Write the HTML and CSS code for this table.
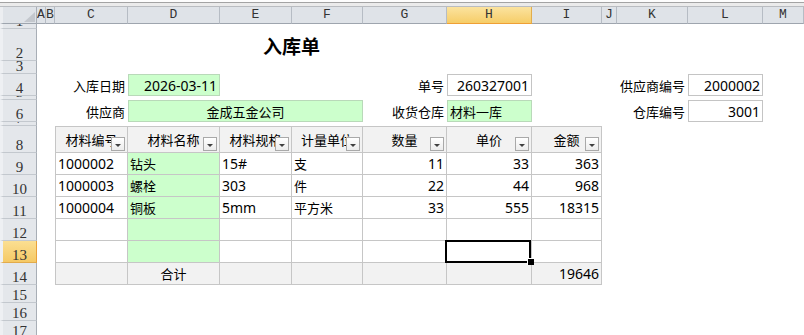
FILE: index.html
```html
<!DOCTYPE html>
<html lang="zh-CN">
<head>
<meta charset="utf-8">
<title>入库单</title>
<link rel="stylesheet" href="styles.css">
</head>
<body>
<div class="window">
  <div class="formula-edge"></div>
  <div class="sheet">
    <div class="row r-cols">
      <div class="corner"><svg width="11" height="10" viewBox="0 0 11 10"><polygon points="11,0 11,10 0,10" fill="#c3c7cd"/></svg></div>
      <div class="colhead">A</div>
      <div class="colhead">B</div>
      <div class="colhead">C</div>
      <div class="colhead">D</div>
      <div class="colhead">E</div>
      <div class="colhead">F</div>
      <div class="colhead">G</div>
      <div class="colhead active">H</div>
      <div class="colhead">I</div>
      <div class="colhead">J</div>
      <div class="colhead">K</div>
      <div class="colhead">L</div>
      <div class="colhead">M</div>
    </div>

    <div class="row r1"><div class="rh">1</div></div>
    <div class="row r2">
      <div class="rh">2</div>
      <div class="cell title span-ef">入库单</div>
    </div>
    <div class="row r3"><div class="rh">3</div></div>
    <div class="row r4">
      <div class="rh">4</div>
      <div class="cell label cc">入库日期</div>
      <div class="cell field green num right cd">2026-03-11</div>
      <div class="cell label cg">单号</div>
      <div class="cell field num right ch">260327001</div>
      <div class="cell label ck">供应商编号</div>
      <div class="cell field num right cl">2000002</div>
    </div>
    <div class="row r5"><div class="rh">5</div></div>
    <div class="row r6">
      <div class="rh">6</div>
      <div class="cell label cc">供应商</div>
      <div class="cell field green center span-df">金成五金公司</div>
      <div class="cell label cg">收货仓库</div>
      <div class="cell field green ch">材料一库</div>
      <div class="cell label ck">仓库编号</div>
      <div class="cell field num right cl">3001</div>
    </div>
    <div class="row r7"><div class="rh">7</div></div>

    <div class="row r8 thead">
      <div class="rh">8</div>
      <div class="tc cc first">材料编号<span class="filter"></span></div>
      <div class="tc">材料名称<span class="filter"></span></div>
      <div class="tc">材料规格<span class="filter"></span></div>
      <div class="tc">计量单位<span class="filter"></span></div>
      <div class="tc">数量<span class="filter"></span></div>
      <div class="tc">单价<span class="filter"></span></div>
      <div class="tc">金额<span class="filter"></span></div>
    </div>

    <div class="row rd">
      <div class="rh">9</div>
      <div class="tc cc first num">1000002</div>
      <div class="tc green">钻头</div>
      <div class="tc num">15#</div>
      <div class="tc">支</div>
      <div class="tc num right">11</div>
      <div class="tc num right">33</div>
      <div class="tc num right">363</div>
    </div>
    <div class="row rd">
      <div class="rh">10</div>
      <div class="tc cc first num">1000003</div>
      <div class="tc green">螺栓</div>
      <div class="tc num">303</div>
      <div class="tc">件</div>
      <div class="tc num right">22</div>
      <div class="tc num right">44</div>
      <div class="tc num right">968</div>
    </div>
    <div class="row rd">
      <div class="rh">11</div>
      <div class="tc cc first num">1000004</div>
      <div class="tc green">铜板</div>
      <div class="tc num">5mm</div>
      <div class="tc">平方米</div>
      <div class="tc num right">33</div>
      <div class="tc num right">555</div>
      <div class="tc num right">18315</div>
    </div>
    <div class="row rd">
      <div class="rh">12</div>
      <div class="tc cc first"></div>
      <div class="tc green"></div>
      <div class="tc"></div>
      <div class="tc"></div>
      <div class="tc"></div>
      <div class="tc"></div>
      <div class="tc"></div>
    </div>
    <div class="row rd">
      <div class="rh active">13</div>
      <div class="tc cc first"></div>
      <div class="tc green"></div>
      <div class="tc"></div>
      <div class="tc"></div>
      <div class="tc"></div>
      <div class="tc selected"></div>
      <div class="tc"></div>
    </div>
    <div class="row rd total">
      <div class="rh">14</div>
      <div class="tc cc first"></div>
      <div class="tc center">合计</div>
      <div class="tc"></div>
      <div class="tc"></div>
      <div class="tc"></div>
      <div class="tc"></div>
      <div class="tc num right">19646</div>
    </div>

    <div class="row rs"><div class="rh">15</div></div>
    <div class="row rs"><div class="rh">16</div></div>
    <div class="row rs"><div class="rh">17</div></div>
  </div>
</div>
</body>
</html>
```

FILE: styles.css
```css
* {
  box-sizing: border-box;
}

html,
body {
  margin: 0;
  padding: 0;
}

body {
  width: 804px;
  height: 335px;
  overflow: hidden;
  background: #fff;
  color: #000;
  font-family: "Noto Sans CJK SC", "Noto Sans", sans-serif;
  font-size: 13px;
}

/* bottom edge of the formula bar */
.formula-edge {
  height: 7px;
  background: linear-gradient(to bottom,
    #fdfdfd 0 2px,
    #a3a3a3 2px 3px,
    #ebebeb 3px 6px,
    #b9bcc0 6px 7px);
}

/* every sheet row shares the same column widths */
.row {
  display: grid;
  grid-template-columns: 37px 9px 9px 73px 92px 72px 71px 84px 85px 70px 15px 71px 75px 1fr;
}

.r-cols { height: 17px; }
.r1 { height: 5px; }
.r2 { height: 32px; }
.r3 { height: 13px; }
.r4 { height: 22px; }
.r5 { height: 4px; }
.r6 { height: 22px; }
.r7 { height: 4px; }
.r8 { height: 27px; }
.rd { height: 22px; }
.rs { height: 18px; }

/* column letters */
.corner {
  background: #dfe3e8;
  border-left: 3px solid #eceef1;
  border-right: 1px solid #a8aeb6;
  border-bottom: 1px solid #9ea5ae;
  display: flex;
  justify-content: flex-end;
  align-items: flex-end;
  padding: 0 1px 1px 0;
}

.colhead {
  background: #dfe3e8;
  border-right: 1px solid #b6bcc4;
  border-bottom: 1px solid #9ea5ae;
  font: 13px/16px "Liberation Mono", monospace;
  color: #333;
  text-align: center;
  overflow: hidden;
}

.colhead.active {
  background: linear-gradient(#fbe39f, #f6cd68);
  border-right-color: #e2ad4c;
  border-bottom-color: #ef9f35;
}

/* row numbers */
.rh {
  grid-column: 1;
  background: #e4e7eb;
  border-left: 3px solid #eef0f3;
  border-right: 1px solid #a8aeb6;
  border-bottom: 1px solid #c3c8ce;
  font: 15px/9px "Liberation Serif", serif;
  color: #333;
  display: flex;
  justify-content: center;
  align-items: flex-end;
  padding-bottom: 2px;
  overflow: hidden;
}

.rh.active {
  background: linear-gradient(#fbdf92, #f5c965);
  border-right-color: #e9a13a;
  border-bottom-color: #e2ab4c;
}

/* column placement */
.cc { grid-column: 4; }
.cd { grid-column: 5; }
.cg { grid-column: 8; }
.ch { grid-column: 9; }
.ck { grid-column: 12; }
.cl { grid-column: 13; }
.span-ef { grid-column: 6 / span 2; }
.span-df { grid-column: 5 / span 3; }

/* form cells */
.cell {
  display: flex;
  align-items: center;
  padding: 0 2px;
  white-space: nowrap;
  overflow: hidden;
}

.label {
  justify-content: flex-end;
  padding-right: 3px;
}

.field {
  border: 1px solid #c4c4c4;
  background: #fff;
}

.field.green {
  border-color: #b9d9b9;
}

.title {
  justify-content: center;
  font-size: 19px;
  font-weight: 700;
}

.green {
  background: #ccffcc;
}

.num {
  font-family: "Noto Sans", sans-serif;
  font-size: 14px;
}

.right {
  justify-content: flex-end;
}

.center {
  justify-content: center;
}

/* item table */
.tc {
  display: flex;
  align-items: center;
  padding: 0 2px;
  border-right: 1px solid #c6c6c6;
  border-bottom: 1px solid #c6c6c6;
  white-space: nowrap;
  overflow: hidden;
}

.tc.first {
  border-left: 1px solid #c6c6c6;
}

.thead .tc {
  position: relative;
  justify-content: center;
  background: #f2f2f2;
  border-top: 1px solid #c6c6c6;
}

.total .tc {
  background: #f2f2f2;
}

/* autofilter drop-down button */
.filter {
  position: absolute;
  right: 2px;
  bottom: 1px;
  width: 14px;
  height: 14px;
  border: 1px solid #a9a9a9;
  background: linear-gradient(#ffffff, #ececec);
}

.filter::after {
  content: "";
  position: absolute;
  left: 3px;
  bottom: 3px;
  border-left: 3px solid transparent;
  border-right: 3px solid transparent;
  border-top: 3px solid #404040;
}

/* active cell frame and fill handle */
.tc.selected {
  position: relative;
  overflow: visible;
}

.tc.selected::before {
  content: "";
  position: absolute;
  left: -2px;
  top: -1px;
  right: 0;
  bottom: -1px;
  border: 2px solid #000;
  z-index: 1;
}

.tc.selected::after {
  content: "";
  position: absolute;
  right: -3px;
  bottom: -3px;
  width: 6px;
  height: 6px;
  background: #000;
  border-left: 1px solid #fff;
  border-top: 1px solid #fff;
  z-index: 2;
}
```
